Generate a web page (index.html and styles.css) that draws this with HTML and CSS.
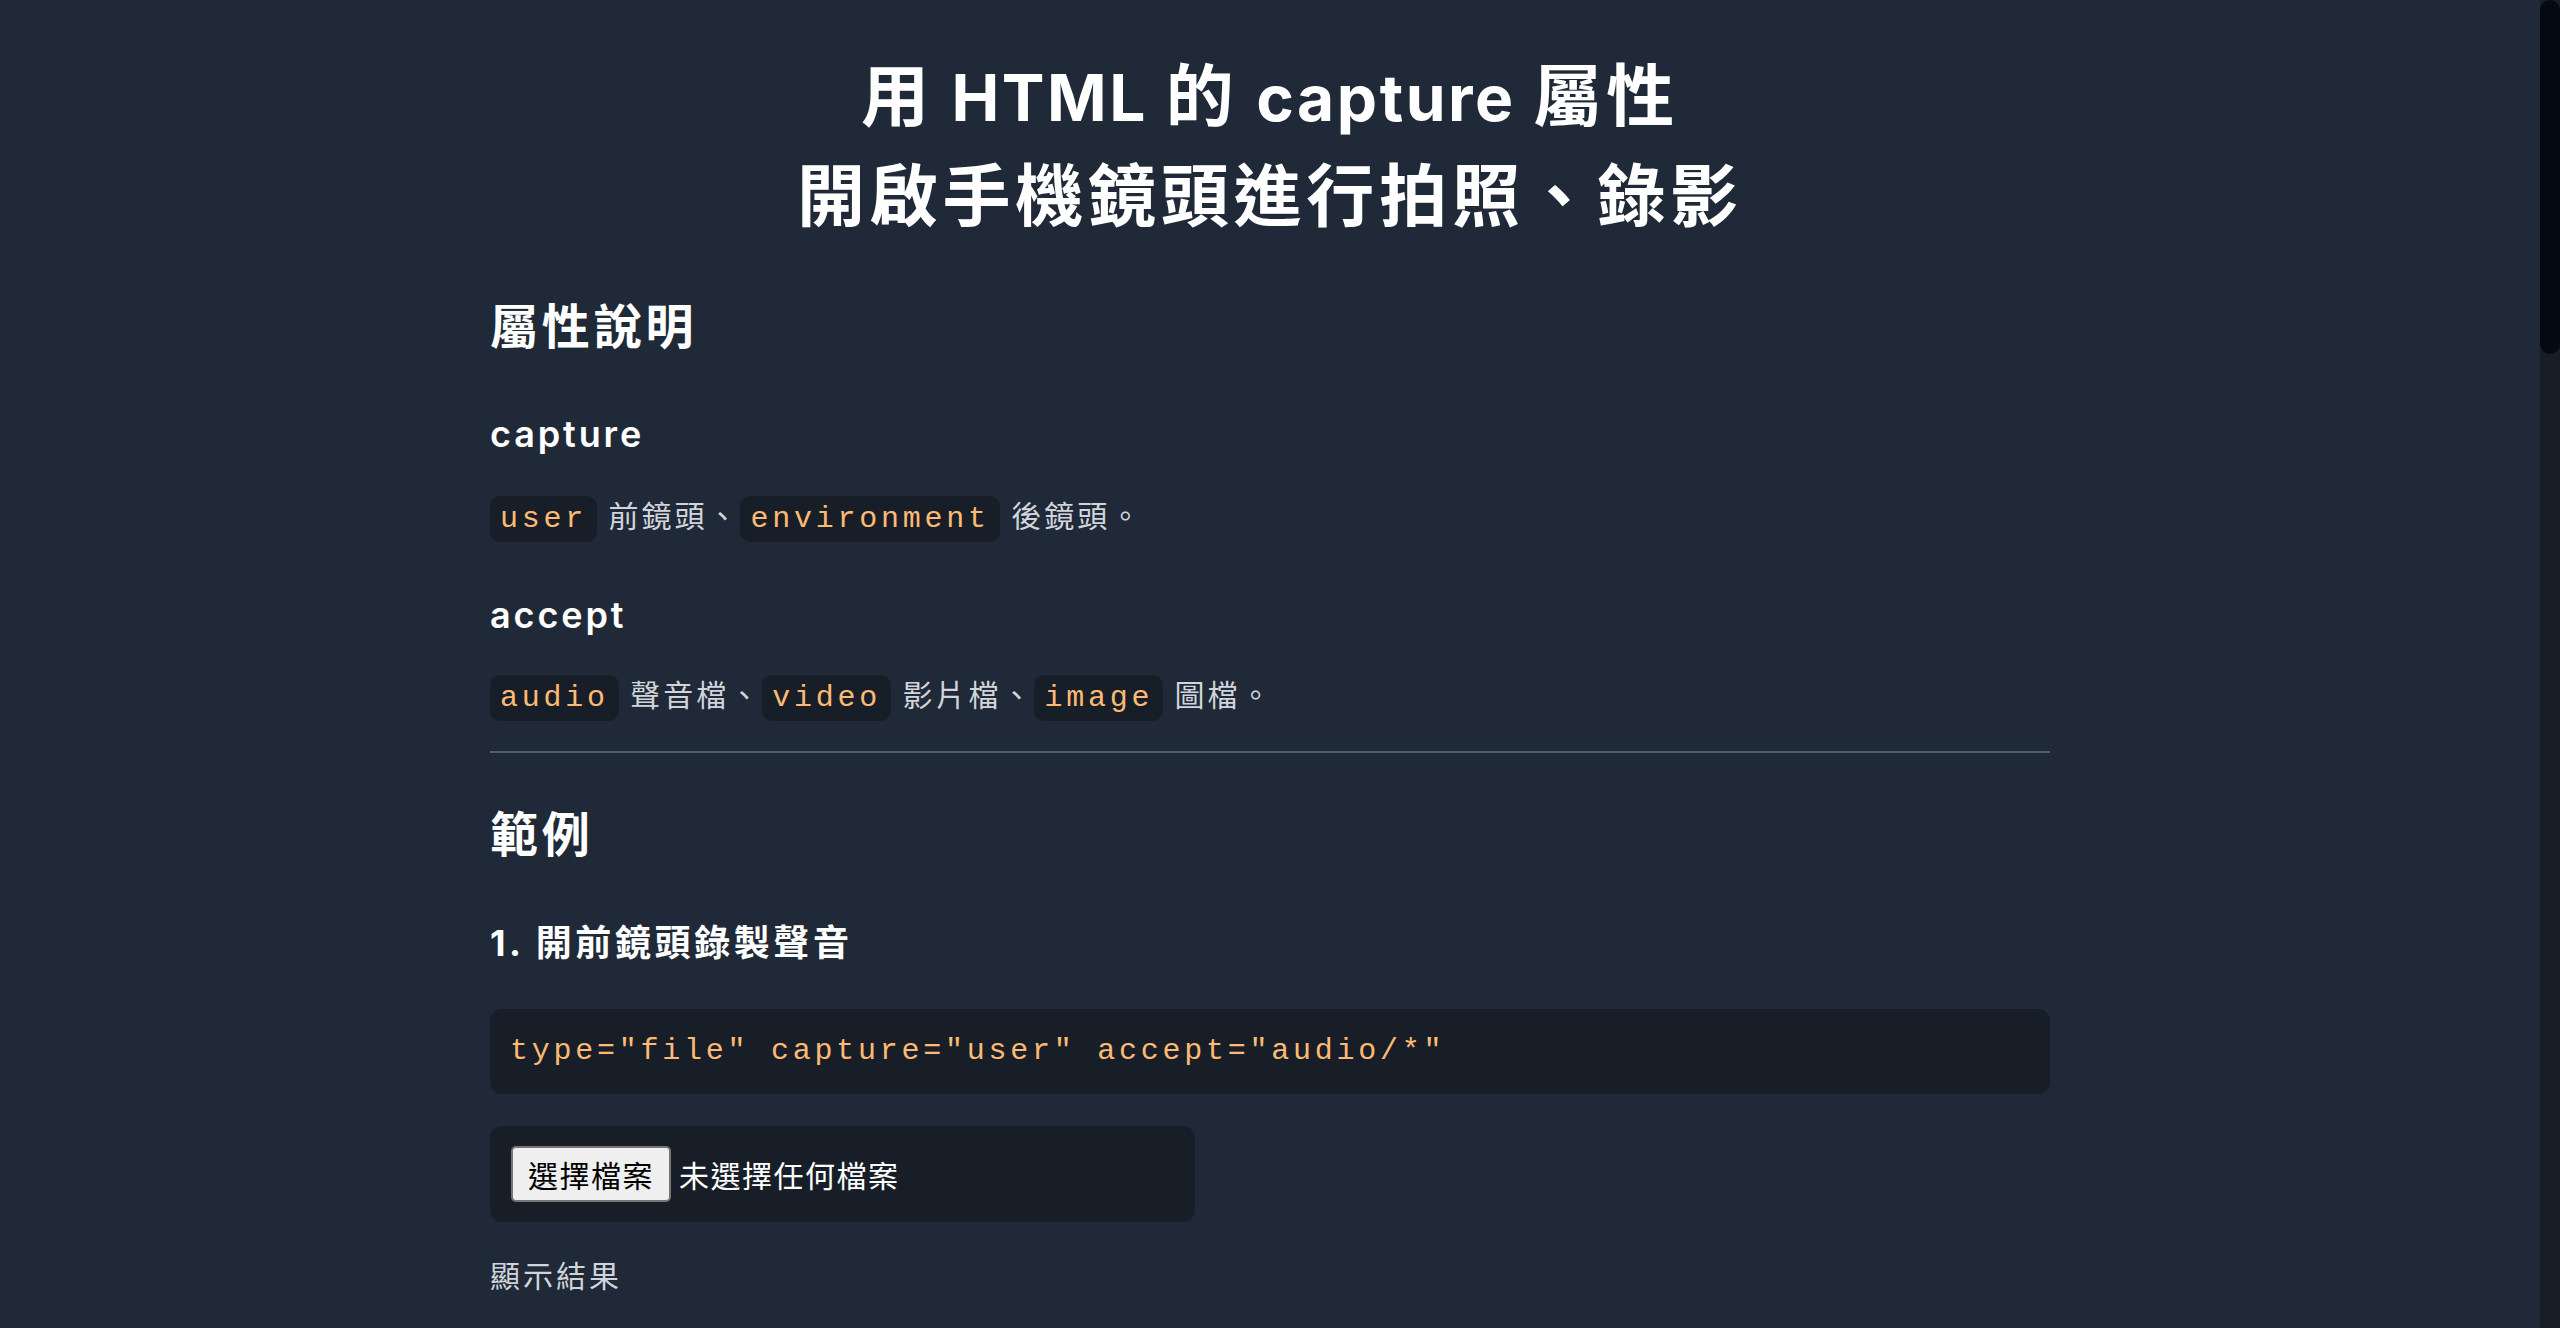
FILE: index.html
```html
<!DOCTYPE html>
<html lang="zh-Hant">
<head>
<meta charset="utf-8">
<title>用 HTML 的 capture 屬性開啟手機鏡頭進行拍照、錄影</title>
<link rel="stylesheet" href="styles.css">
</head>
<body>
<div class="window">
  <div class="content">
    <main class="page">
      <h1 class="title"><span class="cjk">用</span><span class="latin"> HTML </span><span class="cjk">的</span><span class="latin"> capture </span><span class="cjk">屬性</span><br><span class="cjk">開啟手機鏡頭進行拍照、錄影</span></h1>

      <h2 class="section-title">屬性說明</h2>
      <h3 class="attr-name">capture</h3>
      <p class="desc"><code class="tag">user</code> 前鏡頭、<code class="tag">environment</code> 後鏡頭。</p>
      <h3 class="attr-name attr-second">accept</h3>
      <p class="desc"><code class="tag">audio</code> 聲音檔、<code class="tag">video</code> 影片檔、<code class="tag">image</code> 圖檔。</p>

      <hr class="divider">

      <h2 class="section-title">範例</h2>

      <section class="example">
        <h3 class="example-title">1. 開前鏡頭錄製聲音</h3>
        <pre class="code-block">type="file" capture="user" accept="audio/*"</pre>
        <div class="file-box"><button class="file-btn" type="button">選擇檔案</button><span class="file-status">未選擇任何檔案</span></div>
        <p class="result-label">顯示結果</p>
      </section>
    </main>
  </div>
  <div class="scrollbar" aria-hidden="true"><div class="scrollbar-thumb"></div></div>
</div>
</body>
</html>
```
FILE: styles.css
```css
html,
body {
  height: 100%;
}
html {
  background: #1f2937;
}
body {
  margin: 0;
  overflow: hidden;
  background: #1f2937;
  color: #d1d5db;
  font-family: Inter, "Noto Sans CJK TC", "Noto Sans", sans-serif;
  font-size: 30px;
  letter-spacing: 0.1em;
}
.window {
  height: 100%;
  display: flex;
}
.content {
  flex: 1;
  min-width: 0;
  overflow: hidden;
}
.scrollbar {
  width: 20px;
  flex: none;
  background: #181e27;
}
.scrollbar-thumb {
  height: 354px;
  border-radius: 10px;
  background: #050a12;
}
.page {
  width: 1560px;
  margin: 0 auto;
  padding: 47px 0 0;
  display: flex;
  flex-direction: column;
}
.title {
  margin: 0;
  text-align: center;
  color: #ffffff;
  font-size: 68px;
  line-height: 98px;
  font-weight: 700;
}
.title .cjk {
  letter-spacing: 0.07em;
}
.title .latin {
  font-size: 64px;
  letter-spacing: 0.04em;
}
.section-title {
  margin: 46px 0 0;
  color: #ffffff;
  font-size: 48px;
  line-height: 72px;
  font-weight: 700;
  letter-spacing: 0.08em;
}
.attr-name {
  margin: 44px 0 0;
  color: #ffffff;
  font-size: 36px;
  line-height: 54px;
  font-weight: 600;
  letter-spacing: 0.08em;
}
.attr-second {
  margin-top: 42px;
}
.attr-name + .desc {
  margin-top: 25px;
}
.attr-second + .desc {
  margin-top: 23px;
}
.desc {
  margin: 0;
  line-height: 60px;
}
.tag {
  display: inline-block;
  font-family: "Liberation Mono", "Courier New", monospace;
  font-size: 30px;
  line-height: 46px;
  padding: 0 10px;
  border-radius: 10px;
  background: #181e27;
  color: #fdba74;
  vertical-align: middle;
  letter-spacing: 0.125em;
}
.divider {
  margin: 26px 0 0;
  border: 0;
  height: 2px;
  background: #4b5f7a;
}
.example {
  display: flex;
  flex-direction: column;
}
.example-title {
  margin: 45px 0 0;
  color: #ffffff;
  font-size: 36px;
  line-height: 54px;
  font-weight: 700;
  letter-spacing: 0.1em;
}
.code-block {
  margin: 39px 0 0;
  padding: 20px 20px;
  border-radius: 12px;
  background: #181e27;
  color: #fdba74;
  font-family: "Liberation Mono", "Courier New", monospace;
  font-size: 30px;
  line-height: 45px;
  letter-spacing: 0.125em;
}
.file-box {
  margin-top: 32px;
  width: 705px;
  box-sizing: border-box;
  padding: 20px 21px;
  border-radius: 12px;
  background: #181e27;
  display: flex;
  align-items: center;
  gap: 8px;
}
.file-btn {
  height: 56px;
  padding: 0 15px;
  border: 2px solid #767676;
  border-radius: 5px;
  background: #efefef;
  color: #000000;
  font-family: Inter, "Noto Sans CJK TC", sans-serif;
  font-size: 30px;
  letter-spacing: 0.05em;
}
.file-status {
  color: #ffffff;
  letter-spacing: 0.05em;
}
.result-label {
  margin: 32px 0 0;
  line-height: 45px;
}
```
